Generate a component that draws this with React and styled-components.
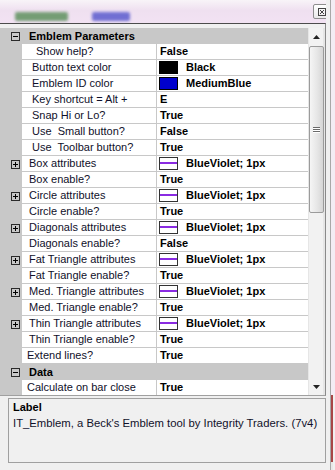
import React from 'react';
import styled, { createGlobalStyle } from 'styled-components';

const GlobalStyle = createGlobalStyle`
  html, body {
    margin: 0;
    padding: 0;
  }
  body {
    width: 335px;
    height: 470px;
    overflow: hidden;
    background: #f0f0f0;
    font-family: "Liberation Sans", Arial, sans-serif;
    font-size: 11px;
  }
`;

const Window = styled.div`
  width: 335px;
  height: 470px;
  display: flex;
  flex-direction: column;
  background: #f0f0f0;
  overflow: hidden;
`;

const TitleBar = styled.div`
  height: 23px;
  flex: none;
  display: flex;
  align-items: flex-start;
  padding-left: 15px;
  gap: 24px;
  box-sizing: border-box;
  background: linear-gradient(to bottom, #f8f4f8 0%, #efe0f0 45%, #f2e2f3 100%);
`;

const Smudge = styled.div`
  margin-top: 12px;
  width: ${p => p.w}px;
  height: 9px;
  border-radius: 2px;
  background: ${p => p.color};
  filter: blur(1.5px);
  opacity: 0.85;
`;

const CloseButton = styled.div`
  margin: 4px 4px 0 auto;
  width: 18px;
  height: 15px;
  box-sizing: border-box;
  border: 1px solid #8e8e8e;
  border-radius: 2px;
  background: linear-gradient(to bottom, #ffffff, #e9e9e9);
  display: flex;
  align-items: center;
  justify-content: center;
`;

const Body = styled.div`
  flex: 1;
  display: flex;
`;

const Main = styled.div`
  width: 326px;
  display: flex;
  flex-direction: column;
`;

const RightEdge = styled.div`
  flex: 1;
  margin-top: -23px;
  border-left: 4px solid #f0f0f0;
  background:
    linear-gradient(to right, #a8a8a8 0 1px, transparent 1px),
    linear-gradient(to bottom, transparent 0 395px, #f0f0f0 395px) 3px 0 / 2px 100% no-repeat,
    linear-gradient(to bottom, #f3ecf4 0 395px, #a84646 395px 462px, #e8e8e8 462px);
`;

const Grid = styled.div`
  height: 373px;
  box-sizing: border-box;
  border-top: 1px solid #4c4c4c;
  border-right: 1px solid #8a8a8a;
  border-bottom: 1px solid #a0a0a0;
  padding-top: 4px;
  background: #f0f0f0;
  display: flex;
  overflow: hidden;
`;

const Rows = styled.div`
  width: 308px;
  height: 367px;
  overflow: hidden;
`;

const Row = styled.div`
  height: 16px;
  display: grid;
  grid-template-columns: 22px 135px 1fr;
  background: ${p => (p.category ? '#c8c8c8' : '#fff')};
`;

const Margin = styled.div`
  background: #c8c8c8;
  display: flex;
  align-items: center;
  padding-left: 11px;
`;

const Expander = styled.div`
  width: 9px;
  height: 9px;
  box-sizing: border-box;
  border: 1px solid #2a2a2a;
  position: relative;

  &::before {
    content: '';
    position: absolute;
    left: 1px;
    top: 3px;
    width: 5px;
    height: 1px;
    background: #000;
  }

  &::after {
    content: '';
    display: ${p => (p.open ? 'none' : 'block')};
    position: absolute;
    left: 3px;
    top: 1px;
    width: 1px;
    height: 5px;
    background: #000;
  }
`;

const CategoryName = styled.div`
  grid-column: 2 / 4;
  padding-left: 7px;
  font-weight: bold;
  line-height: 16px;
  color: #000;
`;

const Name = styled.div`
  box-sizing: border-box;
  border-bottom: 1px solid #c8c8c8;
  border-right: 1px solid #c8c8c8;
  padding-left: ${p => p.indent}px;
  line-height: 15px;
  color: #10102a;
  white-space: pre;
  overflow: hidden;
`;

const Value = styled.div`
  box-sizing: border-box;
  border-bottom: 1px solid #c8c8c8;
  padding-left: 3px;
  display: flex;
  align-items: center;
  gap: 8px;
  font-weight: bold;
  color: #000;
  white-space: pre;
  line-height: 15px;
`;

const ColorSwatch = styled.span`
  width: 19px;
  height: 13px;
  box-sizing: border-box;
  border: 1px solid #000;
  background: ${p => p.color};
  margin-left: -1px;
`;

const LineSwatch = styled.span`
  width: 19px;
  height: 13px;
  box-sizing: border-box;
  border: 1px solid #333;
  margin-left: -1px;
  background: linear-gradient(to bottom, #fff 0 4px, #8a2be2 4px 6px, #fff 6px);
`;

const Scrollbar = styled.div`
  width: 17px;
  height: 367px;
  display: flex;
  flex-direction: column;
  background: linear-gradient(to right, #e6e6e6 0 1px, #f2f2f2 1px 15px, #e6e6e6 15px);
`;

const ArrowButton = styled.div`
  height: 17px;
  flex: none;
  display: flex;
  align-items: center;
  justify-content: center;
`;

const Thumb = styled.div`
  margin: 1px 1px 0 1px;
  height: 167px;
  box-sizing: border-box;
  border: 1px solid #9b9b9b;
  border-radius: 2px;
  background: linear-gradient(to right, #f5f5f5, #e6e6e6 55%, #d6d6d6);
  display: flex;
  flex-direction: column;
  align-items: center;
  justify-content: center;
  gap: 1px;
`;

const GripLine = styled.span`
  width: 7px;
  height: 1px;
  background: #6a6a6a;
  box-shadow: 0 1px 0 #fff;
`;

const Track = styled.div`
  flex: 1;
`;

const Description = styled.div`
  margin: 2px 0 0 8px;
  width: 318px;
  height: 65px;
  box-sizing: border-box;
  border: 1px solid #a0a0a0;
  background: #f0f0f0;
  padding-left: 4px;
  line-height: 16px;
`;

const DescTitle = styled.div`
  font-weight: bold;
  color: #000;
`;

const DescText = styled.div`
  color: #10102a;
  font-size: 11.3px;
  white-space: nowrap;
`;

const Up = () => (
  <svg width="7" height="4" viewBox="0 0 7 4">
    <path d="M3.5 0 L7 4 L0 4 Z" fill="#222" />
  </svg>
);

const Down = () => (
  <svg width="7" height="4" viewBox="0 0 7 4">
    <path d="M0 0 L7 0 L3.5 4 Z" fill="#222" />
  </svg>
);

const CloseGlyph = () => (
  <svg width="8" height="8" viewBox="0 0 8 8">
    <rect x="0.5" y="0.5" width="7" height="7" fill="none" stroke="#444" />
    <path d="M2 2 L6 6 M6 2 L2 6" stroke="#444" strokeWidth="1" />
  </svg>
);

const rows = [
  { cat: 'Emblem Parameters' },
  { name: 'Show help?', indent: 14, value: 'False' },
  { name: 'Button text color', indent: 10, color: '#000', value: 'Black' },
  { name: 'Emblem ID color', indent: 10, color: '#0000cd', value: 'MediumBlue' },
  { name: 'Key shortcut = Alt +', indent: 10, value: 'E' },
  { name: 'Snap Hi or Lo?', indent: 10, value: 'True' },
  { name: 'Use  Small button?', indent: 10, value: 'False' },
  { name: 'Use  Toolbar button?', indent: 10, value: 'True' },
  { name: 'Box attributes', indent: 7, line: true, value: 'BlueViolet; 1px' },
  { name: 'Box enable?', indent: 7, value: 'True' },
  { name: 'Circle attributes', indent: 7, line: true, value: 'BlueViolet; 1px' },
  { name: 'Circle enable?', indent: 7, value: 'True' },
  { name: 'Diagonals attributes', indent: 7, line: true, value: 'BlueViolet; 1px' },
  { name: 'Diagonals enable?', indent: 7, value: 'False' },
  { name: 'Fat Triangle attributes', indent: 7, line: true, value: 'BlueViolet; 1px' },
  { name: 'Fat Triangle enable?', indent: 7, value: 'True' },
  { name: 'Med. Triangle attributes', indent: 7, line: true, value: 'BlueViolet; 1px' },
  { name: 'Med. Triangle enable?', indent: 7, value: 'True' },
  { name: 'Thin Triangle attributes', indent: 7, line: true, value: 'BlueViolet; 1px' },
  { name: 'Thin Triangle enable?', indent: 7, value: 'True' },
  { name: 'Extend lines?', indent: 5, value: 'True' },
  { cat: 'Data' },
  { name: 'Calculate on bar close', indent: 5, value: 'True' },
];

function PropertyRow({ row }) {
  if (row.cat) {
    return (
      <Row category>
        <Margin><Expander open /></Margin>
        <CategoryName>{row.cat}</CategoryName>
      </Row>
    );
  }
  return (
    <Row>
      <Margin>{row.line && <Expander />}</Margin>
      <Name indent={row.indent}>{row.name}</Name>
      <Value>
        {row.color && <ColorSwatch color={row.color} />}
        {row.line && <LineSwatch />}
        {row.value}
      </Value>
    </Row>
  );
}

export default function App() {
  return (
    <Window>
      <GlobalStyle />
      <TitleBar>
        <Smudge w={53} color="#5f925f" />
        <Smudge w={38} color="#5c5cce" />
        <CloseButton><CloseGlyph /></CloseButton>
      </TitleBar>
      <Body>
        <Main>
          <Grid>
            <Rows>
              {rows.map((r, i) => <PropertyRow key={i} row={r} />)}
            </Rows>
            <Scrollbar>
              <ArrowButton><Up /></ArrowButton>
              <Thumb>
                <GripLine />
                <GripLine />
                <GripLine />
              </Thumb>
              <Track />
              <ArrowButton><Down /></ArrowButton>
            </Scrollbar>
          </Grid>
          <Description>
            <DescTitle>Label</DescTitle>
            <DescText>IT_Emblem, a Beck's Emblem tool by Integrity Traders. (7v4)</DescText>
          </Description>
        </Main>
        <RightEdge />
      </Body>
    </Window>
  );
}
